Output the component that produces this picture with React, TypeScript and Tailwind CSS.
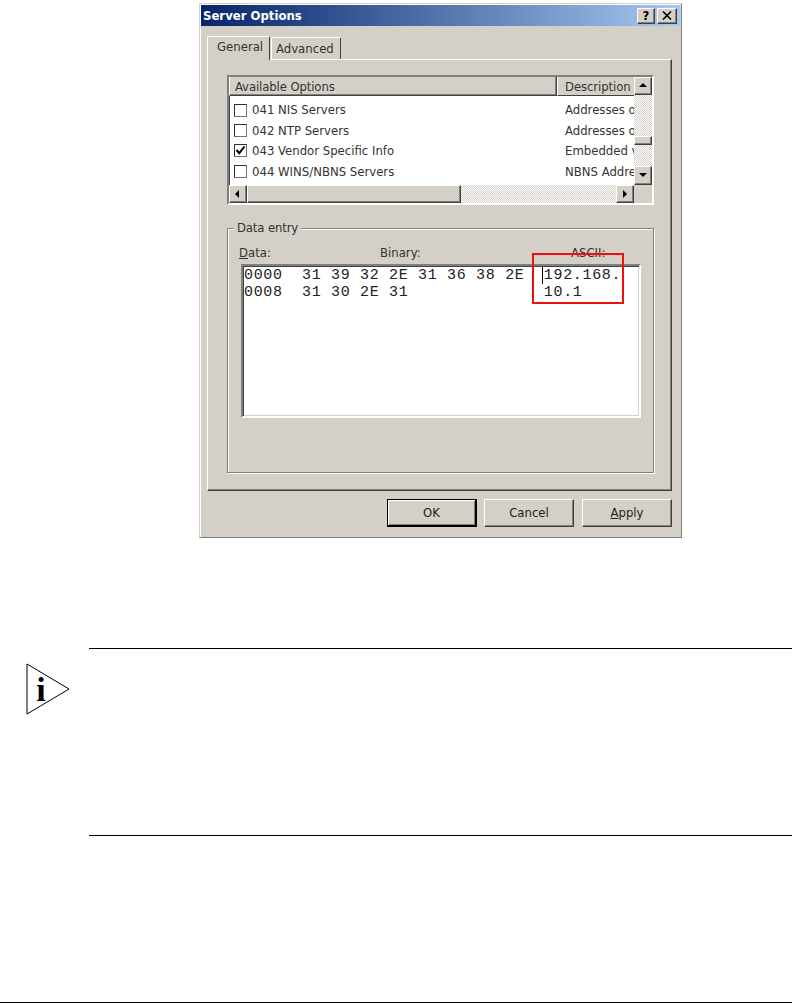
const raised = "border border-t-white border-l-white border-r-[#404040] border-b-[#404040] bg-[#d4d0c8] shadow-[inset_-1px_-1px_0_#808080]";
const sunken = "border-2 border-t-[#808080] border-l-[#808080] border-r-white border-b-white shadow-[inset_1px_1px_0_#404040,inset_-1px_-1px_0_#d4d0c8]";
const dither = "bg-[repeating-conic-gradient(#d4d0c8_0_25%,#ffffff_0_50%)] bg-[length:2px_2px]";

const rows = [
  { label: "041 NIS Servers", desc: "Addresses of", checked: false },
  { label: "042 NTP Servers", desc: "Addresses of", checked: false },
  { label: "043 Vendor Specific Info", desc: "Embedded vendor", checked: true },
  { label: "044 WINS/NBNS Servers", desc: "NBNS Address", checked: false },
];

function Arrow({ dir }: { dir: "up" | "down" | "left" | "right" }) {
  const points = {
    up: "4,1 0,5 8,5",
    down: "0,1 8,1 4,5",
    left: "5,0 5,8 1,4",
    right: "2,0 2,8 6,4",
  }[dir];
  return (
    <svg width="8" height="8" viewBox="0 0 8 8" fill="#000000" className="block">
      <polygon points={points} />
    </svg>
  );
}

function ScrollButton({ dir, className }: { dir: "up" | "down" | "left" | "right"; className: string }) {
  return <div className={`${raised} flex items-center justify-center ${className}`}><Arrow dir={dir} /></div>;
}

function Checkbox({ checked }: { checked: boolean }) {
  return (
    <div className="w-[13px] h-[13px] shrink-0 bg-white border border-t-[#303030] border-l-[#303030] border-r-[#707070] border-b-[#707070]">
      {checked && (
        <svg width="11" height="11" viewBox="0 0 11 11" className="block">
          <path d="M1.5 5 L4.3 8.2 L9.5 1.5" fill="none" stroke="#000000" strokeWidth="2" />
        </svg>
      )}
    </div>
  );
}

function DialogButton({ label, isDefault, className }: { label: React.ReactNode; isDefault?: boolean; className?: string }) {
  return (
    <div
      className={`w-[90px] h-[28px] flex items-center justify-center text-[13px] text-[#222222] ${className ?? ""} ${
        isDefault
          ? "border border-black border-b-2 border-r-2 bg-[#d4d0c8] shadow-[inset_1px_1px_0_#ffffff,inset_-1px_-1px_0_#808080]"
          : raised
      }`}
    >
      {label}
    </div>
  );
}

function OptionsList() {
  return (
    <div className={`${sunken} ml-[19px] mt-[15px] w-[427px] h-[130px] flex bg-white`}>
      <div className="w-[405px] flex flex-col">
        <div className="flex h-[19px] text-[13px] text-[#333333]">
          <div className={`${raised} w-[328px] pl-[5px] leading-[19px] border-t-0 tracking-[-0.12px]`}>Available Options</div>
          <div className={`${raised} w-[77px] pl-[7px] leading-[19px] border-t-0 border-r-0 shadow-none tracking-[-0.1px]`}>Description</div>
        </div>
        <div className="h-[89px] pt-[4px] text-[13px] text-[#333333]">
          {rows.map((row) => (
            <div key={row.label} className="flex items-center h-[20.4px]">
              <div className="w-[328px] pl-[5px] flex items-center gap-[5px]">
                <Checkbox checked={row.checked} />
                <span>{row.label}</span>
              </div>
              <div className="w-[77px] pl-[8px] overflow-hidden whitespace-nowrap">{row.desc}</div>
            </div>
          ))}
        </div>
        <div className="flex h-[18px]">
          <ScrollButton dir="left" className="w-[18px]" />
          <div className={`${raised} w-[214px]`} />
          <div className={`${dither} flex-1`} />
          <ScrollButton dir="right" className="w-[18px]" />
        </div>
      </div>
      <div className="w-[18px] flex flex-col">
        <ScrollButton dir="up" className="h-[18px]" />
        <div className={`${dither} h-[41px]`} />
        <div className={`${raised} h-[9px]`} />
        <div className={`${dither} h-[21px]`} />
        <ScrollButton dir="down" className="h-[19px]" />
        <div className="flex-1 bg-[#d4d0c8]" />
      </div>
    </div>
  );
}

function DataEntry() {
  return (
    <div className="ml-[19px] mt-[23px] w-[427px] h-[245px] border border-[#808080] shadow-[inset_1px_1px_0_#ffffff,1px_1px_0_#ffffff] flex flex-col">
      <div className="-mt-[9px] ml-[6px] w-fit px-[3px] bg-[#d4d0c8] text-[13px] leading-[16px] text-[#333333] tracking-[-0.15px]">Data entry</div>
      <div className="relative mt-[9px] h-[16px] flex text-[13px] leading-[16px] text-[#333333]">
        <span className="ml-[11px] w-[141px]"><span className="underline">D</span>ata:</span>
        <span className="w-[191px]">Binary:</span>
        <span>ASCII:</span>
      </div>
      <div className={`${sunken} relative ml-[13px] mt-[3px] w-[400px] h-[154px] bg-white pl-px pt-[1px] font-['Liberation_Mono',monospace] text-[15px] tracking-[0.67px] leading-[17px] text-[#222222] whitespace-pre`}>
        <div>
          {"0000  31 39 32 2E 31 36 38 2E  "}
          <span className="border-l border-black -ml-[2px] pl-px">192.168.</span>
        </div>
        <div>{"0008  31 30 2E 31              10.1"}</div>
      </div>
    </div>
  );
}

export default function App() {
  return (
    <div className="relative w-[792px] h-[1004px] bg-white overflow-hidden font-['DejaVu_Sans_Condensed','Liberation_Sans',sans-serif]">
      <div className="ml-[199px] pt-[3px]">
        <div className="w-[483px] h-[535px] flex flex-col bg-[#d4d0c8] border border-t-[#d4d0c8] border-l-[#d4d0c8] border-r-[#808080] border-b-[#808080] shadow-[inset_1px_1px_0_#ffffff]">
          <div className="h-[21px] mx-px mt-px flex items-center bg-linear-to-r from-[#0a246a] to-[#a6caf0] pl-[2px] pr-[3px]">
            <span className="flex-1 text-[13px] font-bold text-white">Server Options</span>
            <div className={`${raised} w-[18px] h-[16px] flex items-center justify-center text-[13px] font-bold leading-none text-black`}>?</div>
            <div className={`${raised} ml-[2px] w-[20px] h-[16px] flex items-center justify-center`}>
              <svg width="10" height="9" viewBox="0 0 10 9"><path d="M1 0.5 L9 8.5 M9 0.5 L1 8.5" stroke="#000000" strokeWidth="1.6" /></svg>
            </div>
          </div>

          <div className="relative z-10 ml-[7px] mt-[10px] flex items-end text-[13px] text-[#333333]">
            <div className="w-[63px] h-[24px] -mb-px bg-[#d4d0c8] border border-b-0 border-t-white border-l-white border-r-[#404040] rounded-t-[2px] pl-[9px]">General</div>
            <div className="ml-px w-[70px] h-[22px] bg-[#d4d0c8] border border-b-0 border-t-white border-l-white border-r-[#404040] rounded-t-[2px] pl-[4px] pt-px">Advanced</div>
          </div>

          <div className="ml-[7px] w-[465px] h-[432px] border border-t-white border-l-white border-r-[#404040] border-b-[#404040] shadow-[inset_-1px_-1px_0_#808080]">
            <OptionsList />
            <DataEntry />
          </div>

          <div className="mt-[8px] ml-[187px] flex gap-[7px]">
            <DialogButton label="OK" isDefault />
            <DialogButton label="Cancel" />
            <DialogButton label={<span><span className="underline">A</span>pply</span>} className="ml-px" />
          </div>
        </div>
      </div>

      {/* red highlight drawn over the screenshot */}
      <div className="absolute left-[532px] top-[253px] w-[92px] h-[51px] border-2 border-[#ee1111]" />

      <div className="mt-[110px] flex">
        <div className="w-[89px] pl-[26px] pt-[15px]">
          <svg width="45" height="53" viewBox="0 0 45 53">
            <polygon points="1,1 43,26 1,51" fill="#ffffff" stroke="#000000" strokeWidth="1" />
            <text x="15" y="38" textAnchor="middle" fontFamily="Liberation Serif" fontWeight="700" fontSize="34" fill="#000000">i</text>
          </svg>
        </div>
        <div className="flex-1 h-[188px] border-y border-black" />
      </div>
      <div className="mt-[166px] h-px bg-black" />
    </div>
  );
}
